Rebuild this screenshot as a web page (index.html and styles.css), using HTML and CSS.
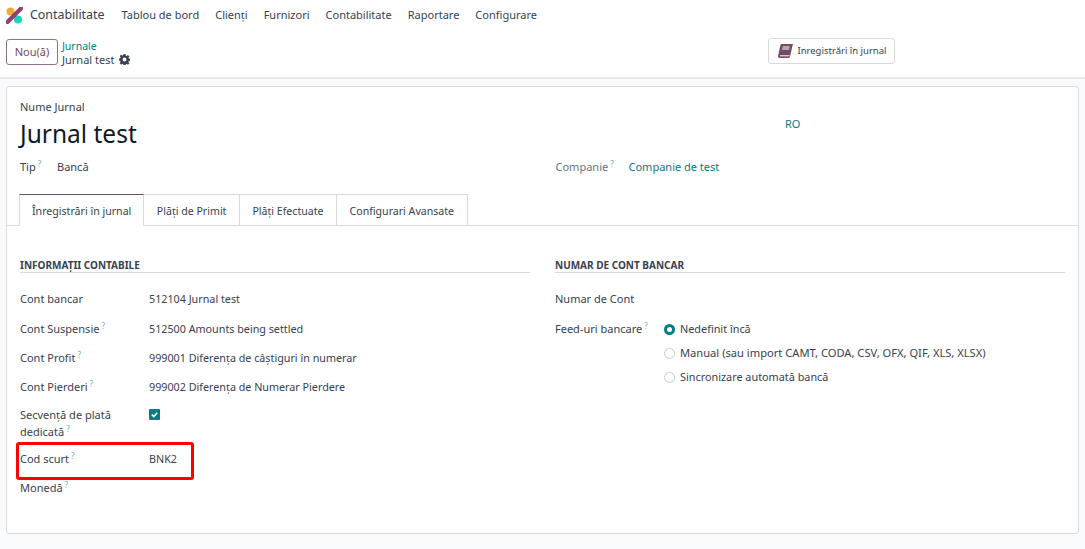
FILE: index.html
```html
<!DOCTYPE html>
<html lang="ro">
<head>
<meta charset="utf-8">
<title>Jurnal test</title>
<link rel="stylesheet" href="styles.css">
</head>
<body>
<header class="navbar">
  <svg class="logo" width="17" height="17" viewBox="0 0 17 17">
    <circle cx="4.5" cy="4.5" r="4" fill="#f6a93b"/>
    <circle cx="12" cy="12.5" r="4" fill="#1ad3bb"/>
    <path d="M1.5 15 L15 1.5" stroke="#8f3f71" stroke-width="4.2" stroke-linecap="round"/>
  </svg>
  <span class="brand">Contabilitate</span>
  <nav class="menu">
    <span>Tablou de bord</span><span>Clienți</span><span>Furnizori</span><span>Contabilitate</span><span>Raportare</span><span>Configurare</span>
  </nav>
</header>
<section class="control">
  <button class="new">Nou(ă)</button>
  <div class="crumbs">
    <a class="link">Jurnale</a>
    <div class="current">Jurnal test
      <svg class="gear" width="11" height="11" viewBox="0 0 16 16"><path fill="#374151" d="M6.6 0h2.8l.4 2.2 1.3.6 1.9-1.3 2 2-1.3 1.9.6 1.3 2.2.4v2.8l-2.2.4-.6 1.3 1.3 1.9-2 2-1.9-1.3-1.3.6-.4 2.2H6.6l-.4-2.2-1.3-.6-1.9 1.3-2-2 1.3-1.9-.6-1.3L-.5 9.4V6.6l2.2-.4.6-1.3L1 3l2-2 1.9 1.3 1.3-.6zM8 5.2a2.8 2.8 0 1 0 0 5.6 2.8 2.8 0 0 0 0-5.6z"/></svg>
    </div>
  </div>
  <button class="stat">
    <svg width="15" height="14" viewBox="0 0 15 14"><path fill="#714b67" d="M3.6 0H15l-.4 1.2-2.6 11.6c-.1.7-.7 1.2-1.4 1.2H1.8C.6 14-.2 13 .1 11.9L2.4 1C2.5.4 3 0 3.6 0z"/><path d="M4.6 3h7M4.2 5h7M2 11.8h9.6" stroke="#fff" stroke-width="1" fill="none"/></svg>
    <span>Inregistrări în jurnal</span>
  </button>
</section>
<main class="sheet">
  <div class="name-label">Nume Jurnal</div>
  <h1>Jurnal test</h1>
  <div class="lang">RO</div>
  <div class="top-fields">
    <div class="top-field"><label class="top-tip">Tip<sup>?</sup></label><span>Bancă</span></div>
    <div class="top-field"><label class="top-co">Companie<sup>?</sup></label><a class="link">Companie de test</a></div>
  </div>
  <div class="tabs">
    <span class="tab active">Înregistrări în jurnal</span>
    <span class="tab">Plăți de Primit</span>
    <span class="tab">Plăți Efectuate</span>
    <span class="tab">Configurari Avansate</span>
  </div>
  <div class="columns">
    <section class="col">
      <h2>INFORMAȚII CONTABILE</h2>
      <div class="row first"><label>Cont bancar</label><span class="value">512104 Jurnal test</span></div>
      <div class="row"><label>Cont Suspensie<sup>?</sup></label><span class="value">512500 Amounts being settled</span></div>
      <div class="row"><label>Cont Profit<sup>?</sup></label><span class="value">999001 Diferența de câștiguri în numerar</span></div>
      <div class="row snug"><label>Cont Pierderi<sup>?</sup></label><span class="value">999002 Diferența de Numerar Pierdere</span></div>
      <div class="row tall"><label>Secvență de plată dedicată<sup>?</sup></label>
        <span class="check"><svg width="11" height="11" viewBox="0 0 11 11"><rect width="11" height="11" rx="1" fill="#017e84"/><path d="M2.8 5.6l2 2 3.4-3.8" stroke="#fff" stroke-width="1.5" fill="none"/></svg></span></div>
      <div class="row"><label>Cod scurt<sup>?</sup></label><span class="value">BNK2</span></div>
      <div class="row"><label>Monedă<sup>?</sup></label><span></span></div>
      <div class="highlight"></div>
    </section>
    <section class="col">
      <h2>NUMAR DE CONT BANCAR</h2>
      <div class="row wide first"><label>Numar de Cont</label><span></span></div>
      <div class="row wide feeds"><label>Feed-uri bancare<sup>?</sup></label>
        <div class="radios">
          <div class="radio on"><i></i>Nedefinit încă</div>
          <div class="radio long"><i></i>Manual (sau import CAMT, CODA, CSV, OFX, QIF, XLS, XLSX)</div>
          <div class="radio"><i></i>Sincronizare automată bancă</div>
        </div>
      </div>
    </section>
  </div>
</main>
</body>
</html>
```
FILE: styles.css
```css
* { box-sizing: border-box; }
html, body { margin: 0; height: 549px; overflow: hidden; }
body {
  background: #f9fafb;
  color: #374151;
  font: 11px/16px "Noto Sans", "Open Sans", sans-serif;
}
.navbar {
  height: 30px;
  background: #fff;
  display: flex;
  align-items: center;
  padding-left: 6px;
}
.logo { flex: none; }
.brand { font-size: 12.4px; margin-left: 7px; }
.menu { display: flex; gap: 16px; margin-left: 17px; color: #374151; }
.control {
  height: 49px;
  background: #fff;
  border-bottom: 2px solid #e7e9ed;
  display: flex;
  align-items: flex-start;
  padding: 8px 0 0 6px;
}
.new {
  width: 52px;
  height: 26px;
  border: 1px solid #8f7189;
  border-radius: 3px;
  background: #fff;
  color: #714b67;
  font: inherit;
  padding: 0;
  margin-top: 1px;
}
.crumbs { margin-left: 4px; line-height: 13px; padding-top: 2px; }
.link { color: #017e84; }
.crumbs .link { font-size: 10.5px; display: block; }
.current { display: flex; align-items: center; gap: 5px; color: #374151; }
.stat {
  width: 127px;
  height: 26px;
  margin-left: 638px;
  border: 1px solid #d8dadd;
  border-radius: 3px;
  background: #fff;
  color: #374151;
  font: 9.5px/14px "Noto Sans", sans-serif;
  display: flex;
  align-items: center;
  gap: 4px;
  padding: 0 0 0 9px;
}
.sheet {
  position: relative;
  margin: 7px 6px 0;
  height: 448px;
  background: #fff;
  border: 1px solid #d8dadd;
  border-radius: 3px;
  padding: 12px 0 0;
}
.name-label { margin-left: 13px; }
h1 { margin: 1px 0 0 13px; font-size: 24.5px; line-height: 36px; font-weight: 400; color: #111827; }
.lang { position: absolute; left: 778px; top: 29px; color: #017e84; }
.top-fields { display: flex; margin-top: 7px; height: 36px; }
.top-field { width: 536px; padding-left: 13px; display: flex; }
.top-tip { width: 37px; }
.top-co { width: 73px; color: #6b7280; }
sup { font-size: 8px; line-height: 0; color: #5fb4b8; margin-left: 2px; vertical-align: 4px; }
.tabs {
  display: flex;
  height: 31px;
  padding-left: 12px;
  border-bottom: 1px solid #d8dadd;
  align-items: flex-end;
  font-size: 10.6px;
}
.tab {
  height: 31px;
  padding: 8px 12.5px 0;
  border: 1px solid #d8dadd;
  border-left: 0;
  border-bottom: 0;
}
.tab.active {
  border-left: 1px solid #d8dadd;
  border-top: 1px solid #714b67;
  background: #fff;
  height: 32px;
  margin-bottom: -1px;
  padding: 8px 12px 0;
}
.columns { display: flex; gap: 25px; padding: 31px 13px 0; }
.col { position: relative; width: 511px; }
h2 {
  margin: 0 0 18px;
  font-size: 10px;
  line-height: 17px;
  font-weight: 700;
  height: 16px;
  border-bottom: 1px solid #d8dadd;
}
.row { display: flex; min-height: 29px; }
.row.first { min-height: 30px; }
.row.snug { min-height: 27px; }
.row label { width: 129px; flex: none; padding-right: 8px; }
.value { font-size: 10.75px; }
.row.tall { min-height: 45px; line-height: 17px; }
.row.wide label { width: 109px; }
.check { height: 16px; display: flex; align-items: center; }
.highlight {
  position: absolute;
  left: -4px;
  top: 185px;
  width: 178px;
  height: 38px;
  border: 3px solid #f00;
  border-radius: 3px;
}
.radios { display: flex; flex-direction: column; gap: 8px; font-size: 10.85px; }
.radio { display: flex; align-items: center; gap: 5px; height: 16px; }
.radio.long { font-size: 11.15px; }
.radio i {
  width: 11px;
  height: 11px;
  border: 1px solid #c5c9ce;
  border-radius: 50%;
  background: #fff;
}
.radio.on i { border: 3.5px solid #017e84; }
```
